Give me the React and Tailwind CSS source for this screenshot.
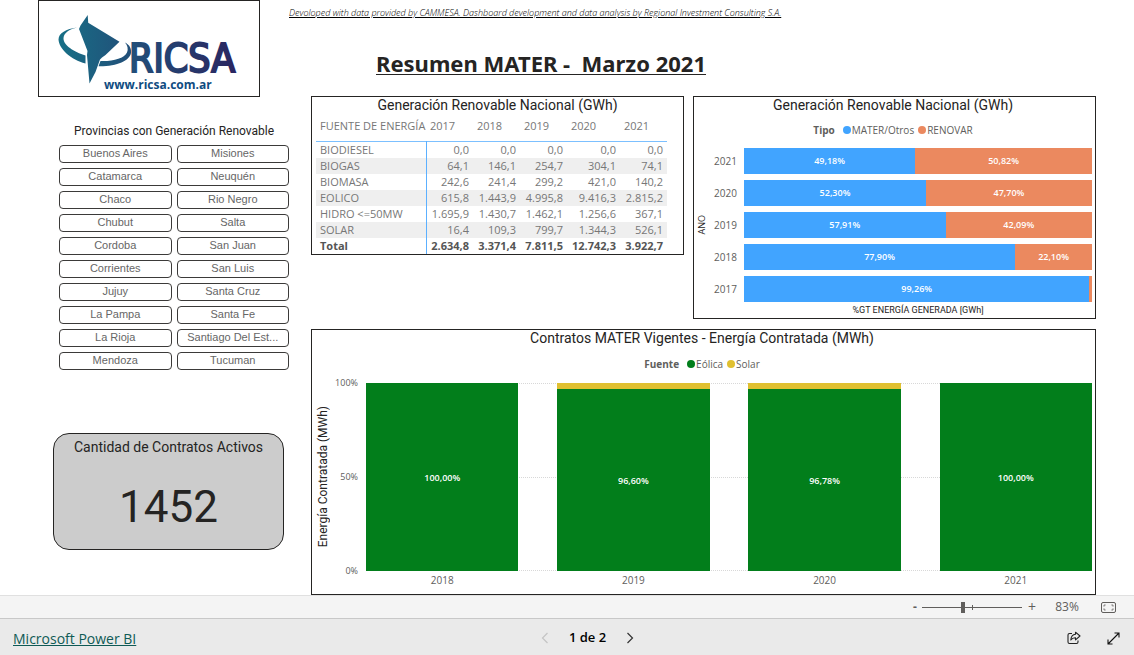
import React from "react";

const provinces = [
  "Buenos Aires", "Misiones",
  "Catamarca", "Neuquén",
  "Chaco", "Rio Negro",
  "Chubut", "Salta",
  "Cordoba", "San Juan",
  "Corrientes", "San Luis",
  "Jujuy", "Santa Cruz",
  "La Pampa", "Santa Fe",
  "La Rioja", "Santiago Del Est...",
  "Mendoza", "Tucuman",
];

const years = ["2017", "2018", "2019", "2020", "2021"];

const sources = [
  ["BIODIESEL", "0,0", "0,0", "0,0", "0,0", "0,0"],
  ["BIOGAS", "64,1", "146,1", "254,7", "304,1", "74,1"],
  ["BIOMASA", "242,6", "241,4", "299,2", "421,0", "140,2"],
  ["EOLICO", "615,8", "1.443,9", "4.995,8", "9.416,3", "2.815,2"],
  ["HIDRO <=50MW", "1.695,9", "1.430,7", "1.462,1", "1.256,6", "367,1"],
  ["SOLAR", "16,4", "109,3", "799,7", "1.344,3", "526,1"],
];

const totals = ["2.634,8", "3.371,4", "7.811,5", "12.742,3", "3.922,7"];

const shares = [
  { year: "2021", mater: 49.18, renovar: 50.82 },
  { year: "2020", mater: 52.3, renovar: 47.7 },
  { year: "2019", mater: 57.91, renovar: 42.09 },
  { year: "2018", mater: 77.9, renovar: 22.1 },
  { year: "2017", mater: 99.26, renovar: 0.74 },
];

const contracts = [
  { year: "2018", wind: 100 },
  { year: "2019", wind: 96.6 },
  { year: "2020", wind: 96.78 },
  { year: "2021", wind: 100 },
];

const percent = (n) => n.toFixed(2).replace(".", ",") + "%";

function Logo() {
  return (
    <svg viewBox="38 0 220 95" className="block h-[95px] w-[220px]" role="img" aria-label="RICSA">
      <defs>
        <linearGradient id="brand" gradientUnits="userSpaceOnUse" x1="58" y1="0" x2="236" y2="0">
          <stop offset="0" stopColor="#176f86" />
          <stop offset="0.4" stopColor="#224f79" />
          <stop offset="1" stopColor="#2a2560" />
        </linearGradient>
      </defs>
      <g fill="url(#brand)">
        <path d="M86.7 14 L87.2 21.8 L118.5 40.7 L104.5 54 L101 56.5 L99 58.500 L94.5 71 L88.5 82.500 L86 54 L86.5 50 L78 28 L79.5 24.5 Z" />
        <path d="M76 26.500 C65 28 57.500 32 57.500 38.500 C58 48 70 59 84.500 62.500 L84.500 54.500 C73 51 62 44 62.500 37 C63 31.500 69 28 76 26.500 Z" />
        <path d="M124 41.500 C129 44 130.500 48 130 52 C128.500 60 116 65.500 97.500 65.200 L99.500 60 C112 60.500 123 57.500 126 51.500 C127.500 48 126.500 44.500 124 41.500 Z" />
        <text x="128" y="71" fontFamily="'DejaVu Sans Condensed', 'DejaVu Sans', sans-serif" fontSize="39" stroke="url(#brand)" strokeWidth="2">
          RICSA
        </text>
      </g>
      <text x="103" y="88" fill="#0f4c81" fontFamily="'Open Sans', sans-serif" fontSize="12" fontWeight="700">
        www.ricsa.com.ar
      </text>
    </svg>
  );
}

function PanelTitle({ children }) {
  return <h2 className="text-center font-['Roboto',sans-serif] text-sm leading-4 text-[#252423]">{children}</h2>;
}

function Legend({ title, items }) {
  return (
    <div className="flex items-center justify-center gap-1 text-[10px] leading-4 text-[#605e5c]">
      <span className="mr-1 font-bold">{title}</span>
      {items.map(([name, dot]) => (
        <span key={name} className="flex items-center gap-px">
          <span className={`size-2 rounded-full ${dot}`} />
          {name}
        </span>
      ))}
    </div>
  );
}

function SourceTable() {
  return (
    <section className="w-[373px] shrink-0 self-start border border-[#252423]">
      <PanelTitle>Generación Renovable Nacional (GWh)</PanelTitle>
      <table className="ml-1 w-[351px] table-fixed border-collapse text-[11px] leading-4 text-[#777]">
        <colgroup>
          <col className="w-[110px]" />
          <col className="w-[47px]" />
          <col className="w-[47px]" />
          <col className="w-[47px]" />
          <col className="w-[53px]" />
          <col className="w-[47px]" />
        </colgroup>
        <thead>
          <tr className="h-7 border-b border-[#7cc0ff]">
            <th scope="col" className="pb-0.5 pl-1 text-left font-normal whitespace-nowrap">FUENTE DE ENERGÍA</th>
            {years.map((y) => (
              <th scope="col" key={y} className="pb-0.5 pl-1 text-left font-normal">{y}</th>
            ))}
          </tr>
        </thead>
        <tbody>
          {sources.map(([name, ...cells]) => (
            <tr key={name} className="even:bg-[#efefef]">
              <th scope="row" className="border-r border-[#5cb0ff] pl-1 text-left font-normal">{name}</th>
              {cells.map((c, i) => (
                <td key={i} className="pr-1 text-right">{c}</td>
              ))}
            </tr>
          ))}
          <tr className="font-bold text-[#555]">
            <th scope="row" className="border-r border-[#5cb0ff] pl-1 text-left">Total</th>
            {totals.map((c) => (
              <td key={c} className="pr-1 text-right">{c}</td>
            ))}
          </tr>
        </tbody>
      </table>
    </section>
  );
}

function ShareChart() {
  return (
    <section className="min-w-0 flex-1 border border-[#252423] pr-[3px]">
      <PanelTitle>Generación Renovable Nacional (GWh)</PanelTitle>
      <div className="mt-[9px]">
        <Legend title="Tipo" items={[["MATER/Otros", "bg-[#41a4ff]"], ["RENOVAR", "bg-[#eb895f]"]]} />
      </div>
      <div className="mt-[10px] flex">
        <div className="flex w-4 items-center justify-center">
          <span className="rotate-180 text-[9px] leading-4 text-[#252423] [writing-mode:vertical-rl]">ANO</span>
        </div>
        <div className="flex flex-1 flex-col gap-1.5">
          {shares.map((s) => (
            <div key={s.year} className="flex h-[26px] items-center">
              <span className="w-[34px] pl-1 text-[10px] text-[#605e5c]">{s.year}</span>
              <div className="flex h-full flex-1 text-[9px] font-semibold text-white">
                <div className="flex items-center justify-center bg-[#41a4ff]" style={{ width: `${s.mater}%` }}>
                  {percent(s.mater)}
                </div>
                <div className="flex items-center justify-center bg-[#eb895f]" style={{ width: `${s.renovar}%` }}>
                  {s.renovar > 5 && percent(s.renovar)}
                </div>
              </div>
            </div>
          ))}
        </div>
      </div>
      <p className="pl-[50px] text-center font-['Roboto',sans-serif] text-[9px] leading-4 text-[#252423]">
        %GT ENERGÍA GENERADA [GWh]
      </p>
    </section>
  );
}

function ContractsChart() {
  return (
    <section className="ml-[22px] border border-[#252423] pr-[3px]">
      <PanelTitle>Contratos MATER Vigentes - Energía Contratada (MWh)</PanelTitle>
      <div className="mt-[10px]">
        <Legend title="Fuente" items={[["Eólica", "bg-[#027e1b]"], ["Solar", "bg-[#e0c030]"]]} />
      </div>
      <div className="mt-[11px] flex">
        <div className="flex w-[22px] items-center justify-center">
          <span className="rotate-180 font-['Roboto',sans-serif] text-xs leading-4 whitespace-nowrap text-[#252423] [writing-mode:vertical-rl]">
            Energía Contratada (MWh)
          </span>
        </div>
        <div className="-my-2 flex w-6 flex-col justify-between text-right text-[9px] leading-4 text-[#605e5c]">
          <span>100%</span>
          <span>50%</span>
          <span>0%</span>
        </div>
        <div className="relative ml-2 h-[188px] flex-1">
          <div className="absolute inset-0 flex flex-col justify-between">
            <div className="border-t border-dotted border-[#d8d8d8]" />
            <div className="border-t border-dotted border-[#d8d8d8]" />
            <div className="border-t border-dotted border-[#d8d8d8]" />
          </div>
          <div className="relative flex h-full justify-between">
            {contracts.map((c) => (
              <div key={c.year} className="flex w-[21%] flex-col bg-[#e0c030] text-[9px] font-semibold text-white">
                <div style={{ height: `${100 - c.wind}%` }} />
                <div className="flex flex-1 items-center justify-center bg-[#027e1b] pt-0.5">{percent(c.wind)}</div>
              </div>
            ))}
          </div>
        </div>
      </div>
      <div className="ml-[54px] flex justify-between pb-[5px] text-[10px] leading-[18px] text-[#605e5c]">
        {contracts.map((c) => (
          <span key={c.year} className="w-[21%] text-center">{c.year}</span>
        ))}
      </div>
    </section>
  );
}

export default function App() {
  return (
    <div className="flex min-h-screen flex-col bg-white font-['Open_Sans','Noto_Sans',sans-serif] text-[#252423]">
      <main className="flex flex-1 pr-[38px]">
        <aside className="w-[289px] shrink-0">
          <div className="ml-[38px] w-[222px] border border-[#252423]">
            <Logo />
          </div>
          <div className="ml-[59px]">
            <h2 className="pt-[26px] pb-[6px] text-center font-['Roboto',sans-serif] text-xs leading-4">
              Provincias con Generación Renovable
            </h2>
            <div className="grid grid-cols-2 gap-[5px]">
              {provinces.map((p) => (
                <button
                  key={p}
                  type="button"
                  className="h-[18px] rounded border border-[#3b3a39] bg-white pb-0.5 font-['Liberation_Sans',sans-serif] text-[11px] leading-[14px] whitespace-nowrap text-[#666]"
                >
                  {p}
                </button>
              ))}
            </div>
          </div>
          <section className="mt-[63px] ml-[53px] h-[117px] w-[231px] rounded-2xl border border-[#252423] bg-[#ccc] pt-[5px] text-center font-['Roboto',sans-serif]">
            <h2 className="text-sm leading-4">Cantidad de Contratos Activos</h2>
            <p className="mt-[22px] text-[44px] leading-[60px]">1452</p>
          </section>
        </aside>

        <div className="min-w-0 flex-1">
          <p className="pt-1 text-[9px] leading-[18px] font-light text-black italic underline">
            Devoloped with data provided by CAMMESA. Dashboard development and data analysis by Regional Investment Consulting S.A.
          </p>
          <h1 className="mt-[25px] mb-[17px] ml-[87px] font-['Noto_Sans',sans-serif] text-[22px] leading-8 font-bold whitespace-pre underline decoration-1 underline-offset-2">
            {"Resumen MATER -  Marzo 2021"}
          </h1>
          <div className="mb-[10px] ml-[22px] flex gap-[9px]">
            <SourceTable />
            <ShareChart />
          </div>
          <ContractsChart />
        </div>
      </main>

      <div className="flex h-6 items-center justify-end border-t border-b border-t-[#e0e0e0] border-b-[#c8c8c8] bg-[#f4f4f4] pr-[18px] text-xs text-[#605e5c]">
        <button type="button" aria-label="Alejar" className="w-[14px] font-bold">-</button>
        <div className="relative flex items-center">
          <input
            type="range"
            aria-label="Zoom"
            min="0"
            max="100"
            defaultValue="41"
            className="h-3 w-[100px] appearance-none bg-transparent [&::-webkit-slider-runnable-track]:h-px [&::-webkit-slider-runnable-track]:bg-[#605e5c] [&::-webkit-slider-thumb]:-mt-[5px] [&::-webkit-slider-thumb]:h-[11px] [&::-webkit-slider-thumb]:w-1 [&::-webkit-slider-thumb]:appearance-none [&::-webkit-slider-thumb]:bg-[#605e5c]"
          />
          <span className="pointer-events-none absolute left-1/2 h-[5px] w-px bg-[#605e5c]" />
        </div>
        <button type="button" aria-label="Acercar" className="w-5 text-sm">+</button>
        <span className="w-[50px] text-center">83%</span>
        <button type="button" aria-label="Ajustar a la página" className="ml-[9px]">
          <svg viewBox="0 0 15 11" className="block h-[11px] w-[15px]" fill="none" stroke="#605e5c">
            <rect x="0.500" y="0.500" width="14" height="10" rx="1.500" />
            <path d="M3 4.500V3.500Q3 3 3.500 3H4.500M10.500 3H11.500Q12 3 12 3.500V4.500M12 6.500V7.500Q12 8 11.500 8H10.500M4.500 8H3.500Q3 8 3 7.500V6.500" />
          </svg>
        </button>
      </div>

      <footer className="grid h-9 grid-cols-[1fr_auto_1fr] items-center bg-[#eaeaea] pt-0.5 pr-[14px] pl-[13px]">
        <a href="https://powerbi.microsoft.com" className="justify-self-start pt-0.5 text-sm text-[#0f5a55] underline">
          Microsoft Power BI
        </a>
        <nav className="flex items-center gap-5 pl-[42px] text-[13px] font-semibold text-black">
          <button type="button" aria-label="Página anterior" disabled>
            <svg viewBox="0 0 8 12" className="block h-3 w-2" fill="none" stroke="#c4c4c4" strokeWidth="1.200">
              <path d="M6.500 1L1.500 6L6.500 11" />
            </svg>
          </button>
          <span>1 de 2</span>
          <button type="button" aria-label="Página siguiente">
            <svg viewBox="0 0 8 12" className="block h-3 w-2" fill="none" stroke="#333" strokeWidth="1.200">
              <path d="M1.500 1L6.500 6L1.500 11" />
            </svg>
          </button>
        </nav>
        <div className="flex items-center gap-[26px] justify-self-end">
          <button type="button" aria-label="Compartir">
            <svg viewBox="0 0 14 14" className="block size-[14px]" fill="none" stroke="#222" strokeWidth="1.100" strokeLinejoin="round">
              <path d="M5 2.500H2.500Q1 2.500 1 4V11Q1 12.500 2.500 12.500H9.500Q11 12.500 11 11V9.500" />
              <path d="M8.500 1.200L13 5L8.500 8.800V6.700Q5.500 6.500 3.800 9Q4.200 3.800 8.500 3.300Z" />
            </svg>
          </button>
          <button type="button" aria-label="Pantalla completa">
            <svg viewBox="0 0 13 13" className="block size-[13px]" fill="none" stroke="#111" strokeWidth="1.100">
              <path d="M1 12L12 1M7.500 1H12V5.500M1 7.500V12H5.500" />
            </svg>
          </button>
        </div>
      </footer>
    </div>
  );
}
